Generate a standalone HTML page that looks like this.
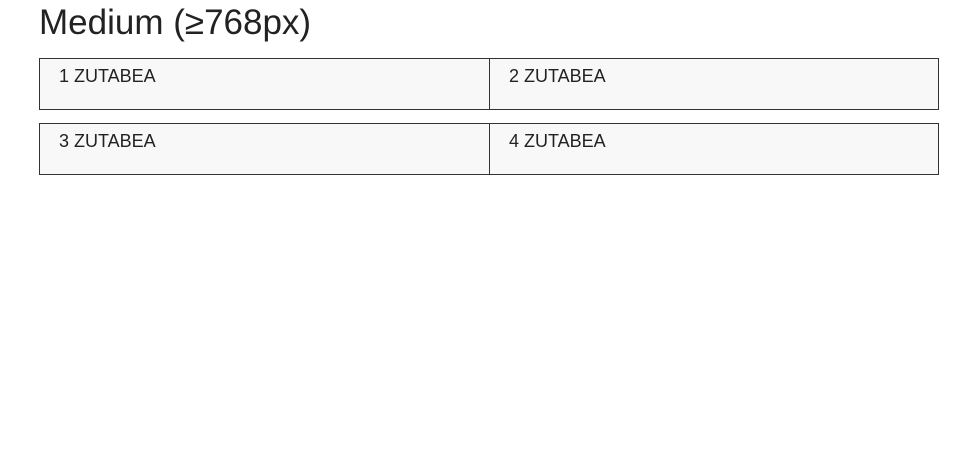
<!DOCTYPE html>
<html><head><style>
body{margin:0;background:#fff;font-family:"Liberation Sans",sans-serif;color:#222;}
h1{position:absolute;left:39px;top:2px;margin:0;font-weight:normal;font-size:35px;line-height:42px;letter-spacing:0}
.b{position:absolute;box-sizing:border-box;height:52px;border:1px solid #333;background:#f8f8f8;font-size:18px;padding:6px 0 0 19px;line-height:22px;letter-spacing:0}
</style></head><body>
<h1>Medium (≥768px)</h1>
<div class="b" style="left:39px;top:58px;width:451px">1 ZUTABEA</div>
<div class="b" style="left:489px;top:58px;width:450px">2 ZUTABEA</div>
<div class="b" style="left:39px;top:123px;width:451px">3 ZUTABEA</div>
<div class="b" style="left:489px;top:123px;width:450px">4 ZUTABEA</div>
</body></html>
